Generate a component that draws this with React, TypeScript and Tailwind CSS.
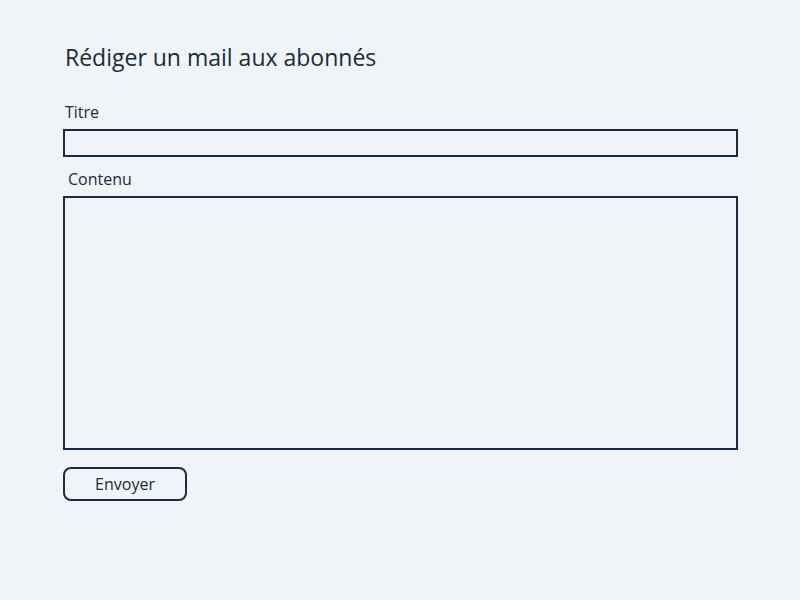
export default function App() {
  return (
    <div
      className="min-h-[600px] w-[800px] bg-[#f0f4f8] text-[#1a2b3c]"
      style={{ fontFamily: '"Open Sans", "Noto Sans", sans-serif' }}
    >
      <div className="flex flex-col px-[63px] pt-[40px]">
        <h1 className="text-[23px] leading-[34px] pl-[2px]">Rédiger un mail aux abonnés</h1>
        <label className="mt-[27px] pl-[2px] text-[16px] leading-[22px]">Titre</label>
        <input className="mt-[6px] h-[28px] w-[675px] border-2 border-[#1a2b3c] bg-transparent outline-none" />
        <label className="mt-[11px] pl-[5px] text-[16px] leading-[22px]">Contenu</label>
        <textarea className="mt-[6px] h-[254px] w-[675px] resize-none border-2 border-[#1a2b3c] bg-transparent outline-none" />
        <button className="mt-[17px] h-[34px] w-[124px] rounded-[8px] border-2 border-[#1a2b3c] text-[16px] leading-[22px]">
          Envoyer
        </button>
      </div>
    </div>
  );
}
